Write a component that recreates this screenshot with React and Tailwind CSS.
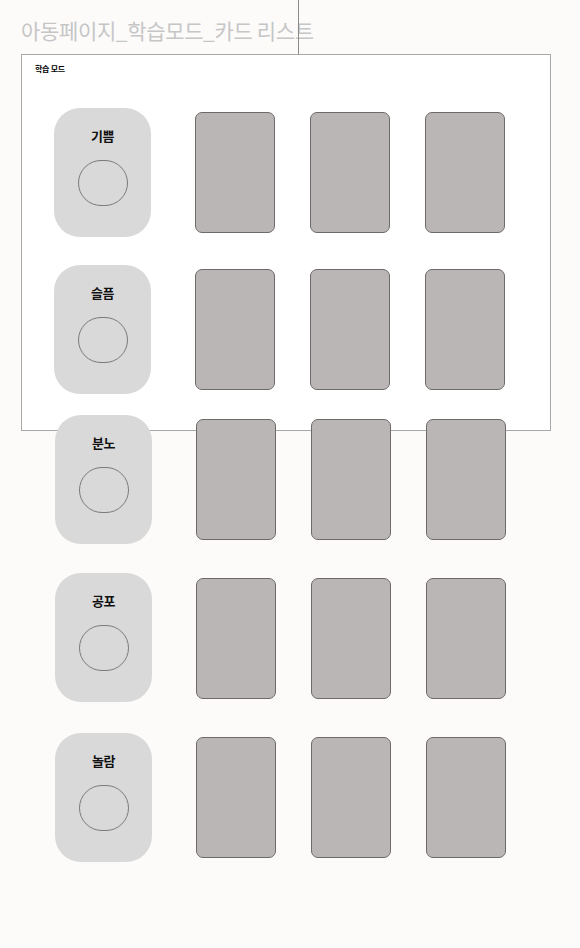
const ROWS = [
    { label: "기쁨", mt: "mt-0", shift: "ml-0", cardMt: "mt-[4px]" },
    { label: "슬픔", mt: "mt-[28px]", shift: "ml-0", cardMt: "mt-[4px]" },
    { label: "분노", mt: "mt-[21px]", shift: "ml-[1px]", cardMt: "mt-[4px]" },
    { label: "공포", mt: "mt-[29px]", shift: "ml-[1px]", cardMt: "mt-[5px]" },
    { label: "놀람", mt: "mt-[31px]", shift: "ml-[1px]", cardMt: "mt-[4px]" },
];

const FONT = "font-['Noto_Sans_CJK_KR','Noto_Sans',sans-serif]";

function EmotionRow({ row }) {
    return (
        <div className={`flex items-start ${row.mt} ${row.shift}`}>
            <div className="w-[97px] h-[129px] rounded-[26px] bg-[#d9d9d9] flex flex-col items-center pt-[19px] shrink-0">
                <span className="text-[13px] leading-[18px] font-bold text-[#111] tracking-[-0.5px]">{row.label}</span>
                <div className="mt-[15px] w-[50px] h-[46px] rounded-full border border-[#7a7a7a]" />
            </div>
            <div className={`flex gap-[35px] ml-[44px] ${row.cardMt}`}>
                {[0, 1, 2].map((i) => (
                    <div key={i} className="w-[80px] h-[121px] rounded-[7px] bg-[#bbb6b6] border border-[#6e6a6a]" />
                ))}
            </div>
        </div>
    );
}

export default function App() {
    return (
        <div className={`relative min-h-screen bg-[#fcfbfa] ${FONT}`}>
            <div className="absolute left-[298px] top-0 w-px h-[54px] bg-[#8a8a8a]" />

            <div className="pl-[21px] pt-[16px] h-[54px]">
                <h1 className="text-[21px] leading-[28px] text-[#c6c6c6] tracking-[-0.35px]">아동페이지_학습모드_카드 리스트</h1>
            </div>

            <div className="ml-[21px] w-[530px] h-[377px] bg-white border border-[#a8a8a8]">
                <div className="h-[53px] pl-[13px] pt-[8px]">
                    <span className="block text-[8px] leading-[12px] font-bold text-black tracking-[-0.3px]">학습 모드</span>
                </div>
                <div className="pl-[32px]">
                    {ROWS.map((r) => <EmotionRow key={r.label} row={r} />)}
                </div>
            </div>
        </div>
    );
}
